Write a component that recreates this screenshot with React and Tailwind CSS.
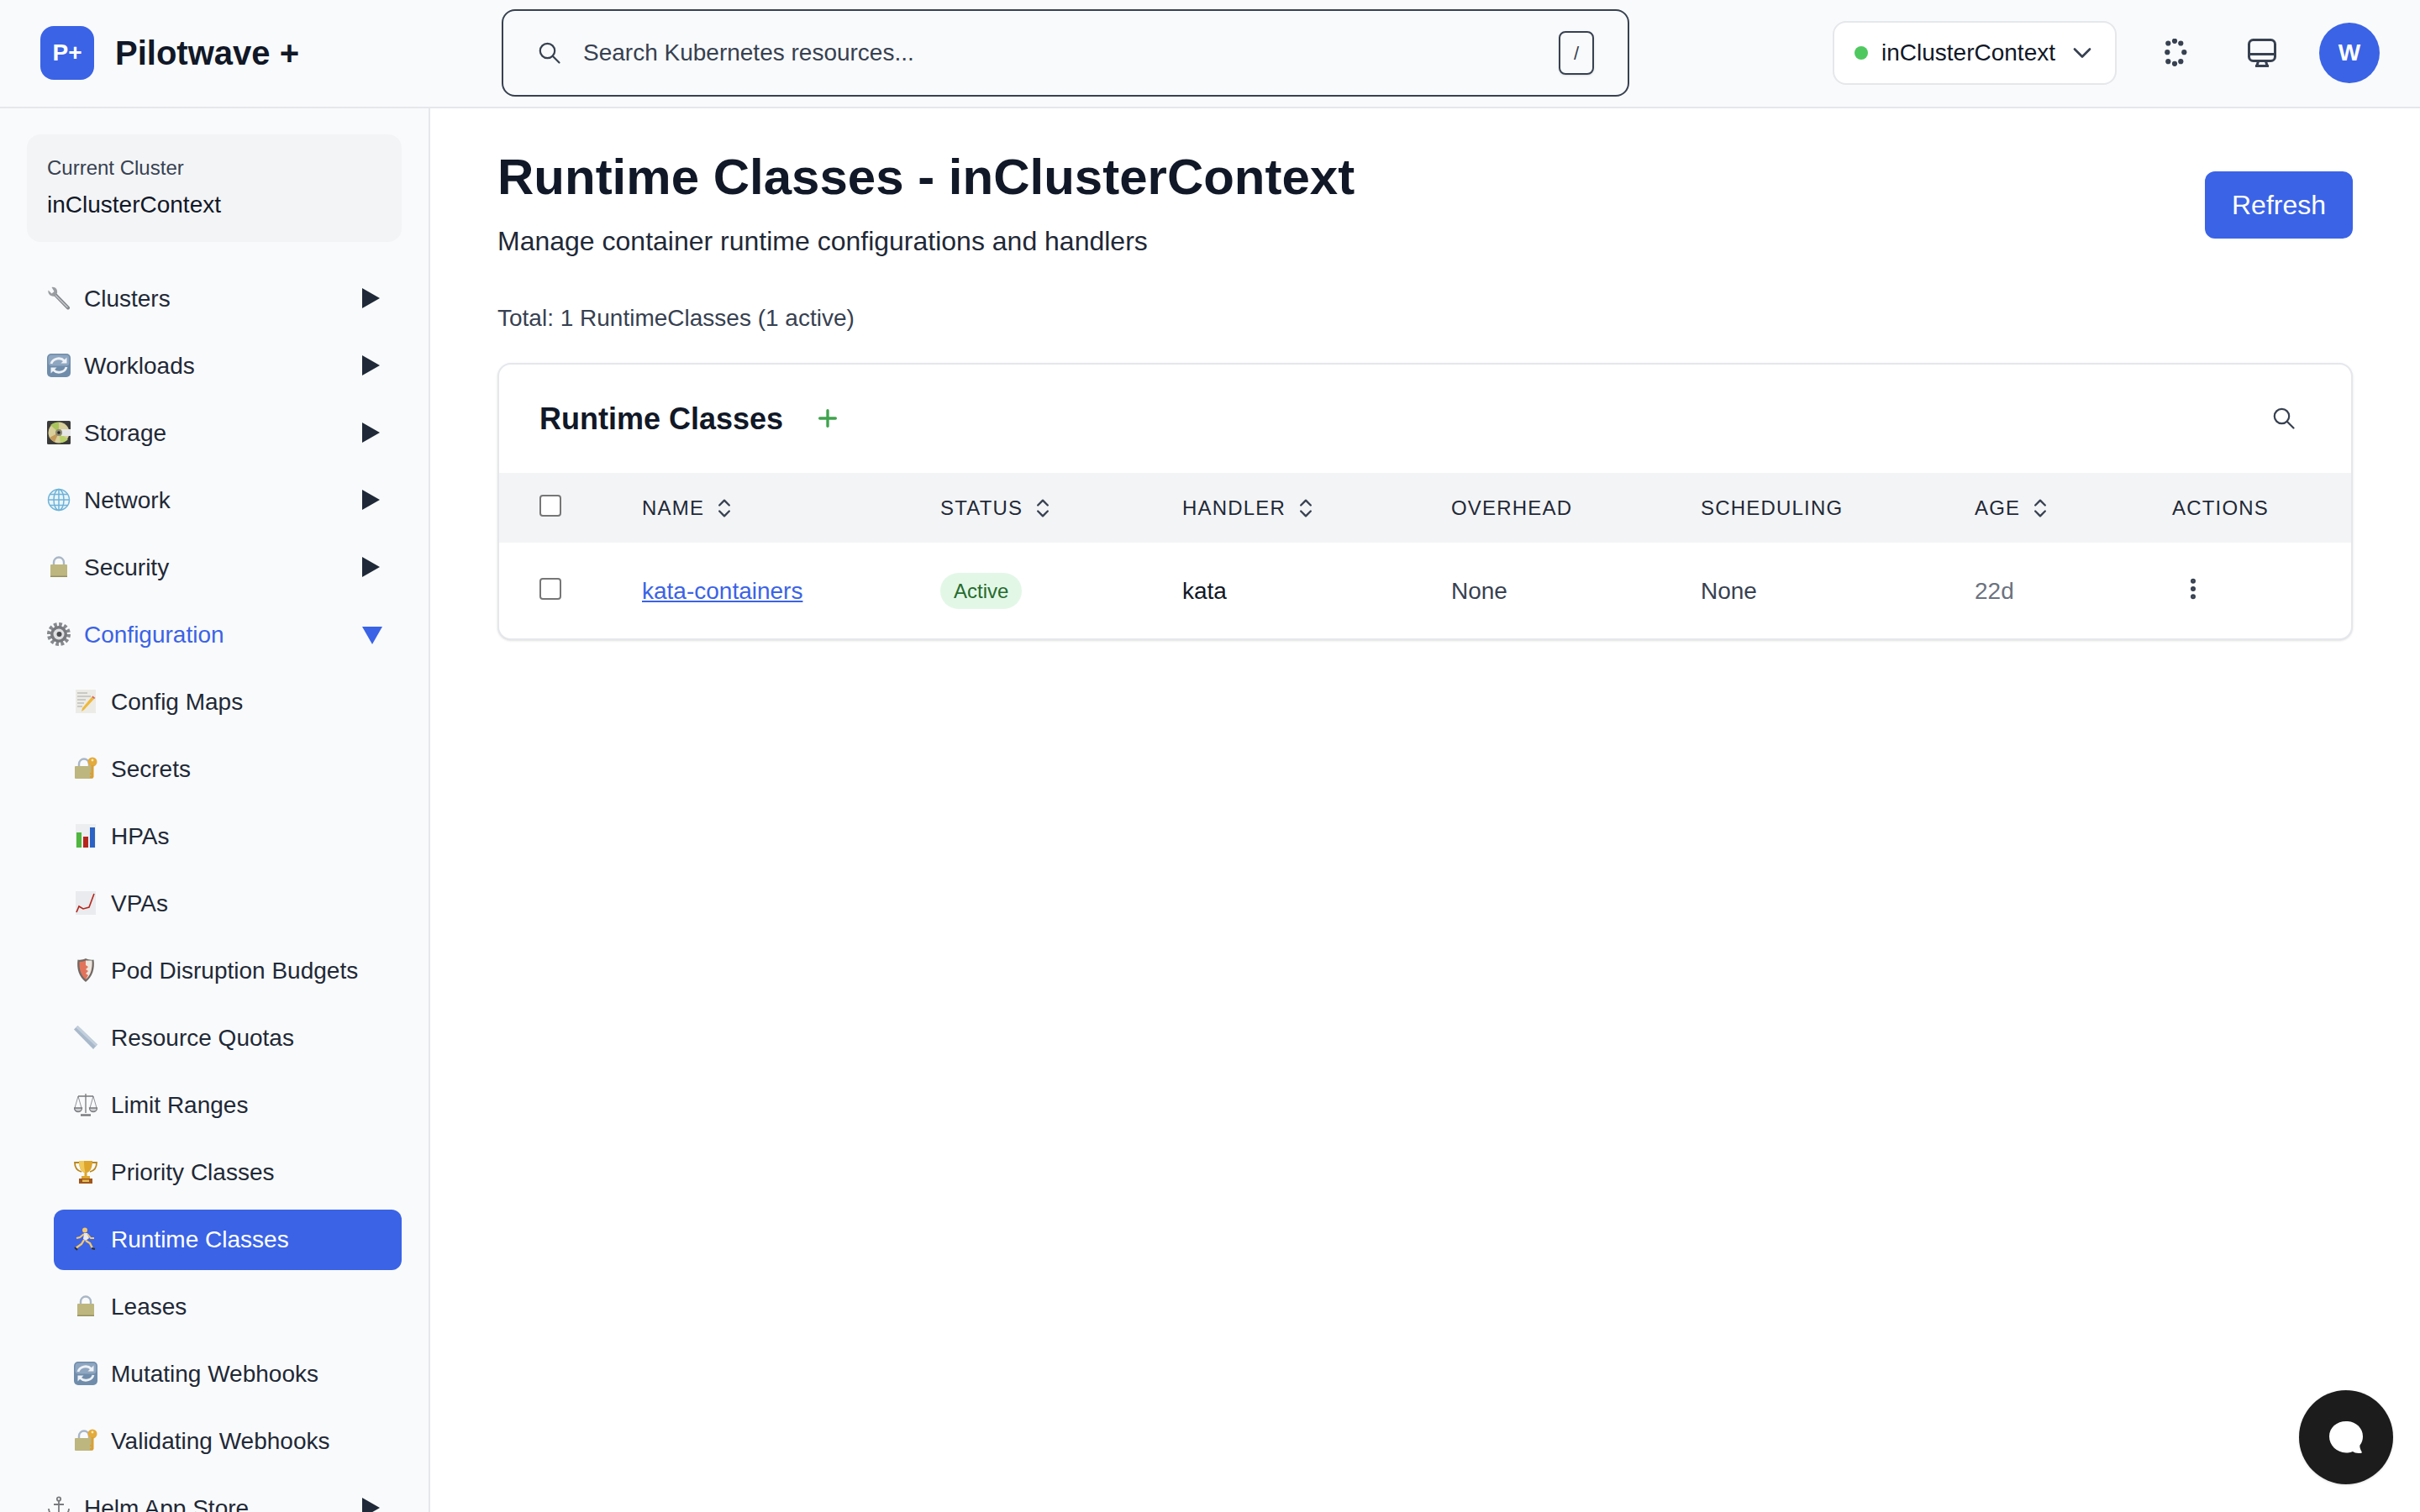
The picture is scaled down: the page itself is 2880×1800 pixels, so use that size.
import { ChevronDown, Plus, ChevronsUpDown, EllipsisVertical } from 'lucide-react';

// the picture shows system emoji; none is installed here, so they are drawn
function Wrench() {
  return (
    <svg viewBox="0 0 28 28" className="w-7 h-7">
      <path d="M25 25.500 9 9" stroke="#85888d" strokeWidth="4" strokeLinecap="round" />
      <path d="M24.500 25 10 10.500" stroke="#c9ccd0" strokeWidth="1.300" />
      <path d="M1.500 4.500 5.500 8.500 8.500 6 5.500 1C9.500 0 13 3.500 12 8L9 11.500C4.500 12.500.500 9 1.500 4.500Z" fill="#9a9da2" />
    </svg>
  );
}

function Cycle() {
  return (
    <svg viewBox="0 0 28 28" className="w-7 h-7">
      <rect width="28" height="28" rx="5" fill="#6f8cab" />
      <rect x="1.500" y="1.500" width="25" height="13" rx="4" fill="#8ea6c0" />
      <path d="M5 12a9 8 0 0 1 15.500-3.500" fill="none" stroke="#eef2f6" strokeWidth="2.800" />
      <path d="M23.500 4.500v7h-7Z" fill="#eef2f6" />
      <path d="M23 16a9 8 0 0 1-15.500 3.500" fill="none" stroke="#eef2f6" strokeWidth="2.800" />
      <path d="M4.500 23.500v-7h7Z" fill="#eef2f6" />
    </svg>
  );
}

function Disc() {
  return (
    <svg viewBox="0 0 28 28" className="w-7 h-7">
      <rect width="28" height="28" rx="1.500" fill="#3a3a3a" />
      <circle cx="14" cy="14" r="12.500" fill="#d8cf9a" />
      <path d="M14 14 4 5a13 13 0 0 1 10-3Z" fill="#a8c45a" />
      <path d="M14 14 25 22a13 13 0 0 1-9 4Z" fill="#b8d06a" />
      <path d="M14 14 3 20a13 13 0 0 0 6 5Z" fill="#c49a5a" />
      <rect x="17" y="10" width="11" height="8" fill="#e6e6e6" />
      <circle cx="14" cy="14" r="4" fill="#8d8a70" />
      <circle cx="14" cy="14" r="1.800" fill="#222" />
    </svg>
  );
}

function Globe() {
  return (
    <svg viewBox="0 0 28 28" className="w-7 h-7" fill="none" stroke="#6fb3d8" strokeWidth="1.500">
      <circle cx="14" cy="14" r="12.500" fill="#eaf5fb" />
      <ellipse cx="14" cy="14" rx="6" ry="12.500" />
      <path d="M14 1.500v25M1.500 14h25M3.500 7.500h21M3.500 20.500h21" />
    </svg>
  );
}

function Lock() {
  return (
    <svg viewBox="0 0 28 28" className="w-7 h-7">
      <path d="M8 12V8.500a6 6 0 0 1 12 0V12" fill="none" stroke="#a9b6c6" strokeWidth="2.400" />
      <rect x="4" y="11" width="20" height="15" rx="1" fill="#bdb67e" />
      <rect x="4" y="24.500" width="20" height="1.500" fill="#96905e" />
    </svg>
  );
}

function Gear() {
  return (
    <svg viewBox="0 0 28 28" className="w-7 h-7">
      <circle cx="14" cy="14" r="11.500" fill="none" stroke="#86898e" strokeWidth="5" strokeDasharray="3.600 2.400" />
      <circle cx="14" cy="14" r="10" fill="#77797e" />
      <circle cx="14" cy="14" r="6.500" fill="#dfe0e2" />
      <circle cx="14.500" cy="14" r="3" fill="#4a4c50" />
    </svg>
  );
}

function Memo() {
  return (
    <svg viewBox="0 0 28 28" className="w-7 h-7">
      <rect x="2" y="0" width="24" height="28" fill="#ecebe6" />
      <path d="M4 4h12M4 8h16M4 12h10M4 16h8M4 20h6" stroke="#a8a8a4" strokeWidth="1" />
      <path d="M24 11 12 24l-3 2 1-4 11-13Z" fill="#eeb93a" />
      <path d="M24 11l-3-2 1.500-1.500 3 2.500Z" fill="#d96a5e" />
    </svg>
  );
}

function LockKey() {
  return (
    <svg viewBox="0 0 28 28" className="w-7 h-7">
      <path d="M6 12V8.500a6 6 0 0 1 12 0V12" fill="none" stroke="#a9b6c6" strokeWidth="2.400" />
      <rect x="1" y="11" width="20" height="15" rx="1" fill="#bdb67e" />
      <circle cx="22" cy="6" r="5.500" fill="#e3aa3c" />
      <circle cx="22" cy="4" r="1.400" fill="#fbe9b4" />
      <path d="M20.500 10h3v14l-1.500 2-3-1v-2h1.500v-2h-1.500v-2h1.500Z" fill="#d99f35" />
    </svg>
  );
}

function Bars() {
  return (
    <svg viewBox="0 0 28 28" className="w-7 h-7">
      <rect x="2" y="0" width="24" height="28" fill="#eceef0" />
      <rect x="3" y="10" width="6" height="18" fill="#4fb63e" />
      <rect x="11" y="15" width="6" height="13" fill="#b5261c" />
      <rect x="19" y="4" width="6" height="24" fill="#2a63c4" />
    </svg>
  );
}

function ChartUp() {
  return (
    <svg viewBox="0 0 28 28" className="w-7 h-7">
      <rect x="2" y="0" width="24" height="28" fill="#e9ebee" />
      <path d="M3 25 6 18 11 21 18 19 24 3" fill="none" stroke="#b5261c" strokeWidth="1.600" />
    </svg>
  );
}

function Shield() {
  return (
    <svg viewBox="0 0 28 28" className="w-7 h-7">
      <path d="M14 0c3 1.500 6 2 9.500 1.500C25 12 22 22 14 28 6 22 3 12 4.500 1.500 8 2 11 1.500 14 0Z" fill="#6e6a66" />
      <path d="M14 2.500c3 1 5 1.500 7.500 1.200C22 12 20 20 14 25 8 20 6 12 6.500 3.700 9 4 11 3.500 14 2.500Z" fill="#e2735a" />
      <path d="M14 2.500h7.500C22 12 20 20 14 25l3-5-3-2 3-3-3-2 3-3-3-2Z" fill="#ece7df" />
    </svg>
  );
}

function Ruler() {
  return (
    <svg viewBox="0 0 28 28" className="w-7 h-7">
      <path d="M4.500 0 28 22.500 23 28 0 4.500Z" fill="#a9b9cb" />
      <path d="M4.500 0 28 22.500 26 24.500 2.500 2.500Z" fill="#c3cfdc" />
    </svg>
  );
}

function Scales() {
  return (
    <svg viewBox="0 0 28 28" className="w-7 h-7" fill="none" stroke="#77797d" strokeWidth="1.300">
      <path d="M14 1v23M5 4h18" />
      <path d="M8 26.500h12" strokeWidth="2.400" />
      <path d="M5 4 1 18M5 4l4 14M23 4l-4 14M23 4l4 14" strokeWidth="0.800" />
      <path d="M0.500 18h9a4.500 4.500 0 0 1-9 0ZM18.500 18h9a4.500 4.500 0 0 1-9 0Z" fill="#cdcfd2" />
    </svg>
  );
}

function Trophy() {
  return (
    <svg viewBox="0 0 28 28" className="w-7 h-7">
      <path d="M7 3H1c0 7 4 10 8 11M21 3h6c0 7-4 10-8 11" fill="none" stroke="#b8861e" strokeWidth="1.800" />
      <path d="M6 1h16c0 9-3 13-6.500 14v4h-3v-4C9 14 6 10 6 1Z" fill="#dda52c" />
      <path d="M6 1h6c0 8 1 11 1.500 14C9 14 6 10 6 1Z" fill="#f0c95a" />
      <rect x="9" y="19" width="10" height="3" fill="#dda52c" />
      <rect x="6" y="22" width="16" height="6" fill="#a0561c" />
      <rect x="10" y="23.500" width="8" height="2.500" fill="#e6bf58" />
    </svg>
  );
}

function Runner() {
  return (
    <svg viewBox="0 0 28 28" className="w-7 h-7">
      <circle cx="13" cy="3.500" r="3" fill="#f4c76a" />
      <path d="M12 7h4l2 6-4 3-3-2Z" fill="#e8eaf0" />
      <path d="M12 8 7 12 3 13M16 8l4 5h4" fill="none" stroke="#f4c76a" strokeWidth="2" />
      <path d="M12 15 9 20 2 25M14 16l5 3 3 6" fill="none" stroke="#f4c76a" strokeWidth="2.400" />
      <path d="M1 24l3 3M21 25l4 1" stroke="#2b2b33" strokeWidth="2" />
    </svg>
  );
}

function Anchor() {
  return (
    <svg viewBox="0 0 28 28" className="w-7 h-7" fill="none" stroke="#787a7e" strokeWidth="1.800">
      <circle cx="14" cy="3.500" r="2.200" />
      <path d="M14 6v20M8 10h12M2 15c0 6 6 10 12 11 6-1 12-5 12-11" />
    </svg>
  );
}

function Arrow({ open }) {
  if (open) {
    return (
      <svg viewBox="0 0 24 21" className="w-6 h-[21px] fill-[#3b63e6]">
        <path d="M0 0h24L12 21Z" />
      </svg>
    );
  }
  return (
    <svg viewBox="0 0 24 24" className="w-6 h-6 -mt-[3px] fill-[#1f2937]">
      <path d="M0 0 21 12 0 24Z" />
    </svg>
  );
}

const topBefore = [
  ['Clusters', Wrench],
  ['Workloads', Cycle],
  ['Storage', Disc],
  ['Network', Globe],
  ['Security', Lock],
];

const configItems = [
  ['Config Maps', Memo],
  ['Secrets', LockKey],
  ['HPAs', Bars],
  ['VPAs', ChartUp],
  ['Pod Disruption Budgets', Shield],
  ['Resource Quotas', Ruler],
  ['Limit Ranges', Scales],
  ['Priority Classes', Trophy],
  ['Runtime Classes', Runner],
  ['Leases', Lock],
  ['Mutating Webhooks', Cycle],
  ['Validating Webhooks', LockKey],
];

function NavRow({ label, Icon, arrow, open, active }) {
  return (
    <div className={`flex items-center h-[72px] mb-2 pl-6 pr-[23px] rounded-xl text-[28px] ${active ? 'bg-[#3b63e6] text-white' : open ? 'text-[#3b63e6]' : 'text-[#1f2937]'}`}>
      <span className="w-7 h-7 mr-4 -mt-[3px] shrink-0"><Icon /></span>
      <span className="whitespace-nowrap">{label}</span>
      {arrow && <span className="ml-auto flex"><Arrow open={open} /></span>}
    </div>
  );
}

function SortIcon() {
  return <ChevronsUpDown size={28} strokeWidth={2} className="text-[#374151] ml-[10px] shrink-0" />;
}

// longer handle than lucide's Search
function SearchIcon() {
  return (
    <svg viewBox="0 0 28 28" className="w-7 h-7 shrink-0 fill-none stroke-[#374151]" strokeWidth="2.200" strokeLinecap="round">
      <circle cx="11.500" cy="11.500" r="8.700" />
      <path d="M18 18l7.500 7.500" />
    </svg>
  );
}

function DotsIcon() {
  const dots = [[8.3, 5.500], [16, 2.800], [23.300, 5.500], [7.300, 16.200], [27.300, 16.200], [8.300, 27.200], [16, 29.800], [23.300, 27.200]];
  return (
    <svg viewBox="0 0 34 34" className="w-[34px] h-[34px] fill-[#374151]">
      {dots.map(([cx, cy]) => <circle key={`${cx}-${cy}`} cx={cx} cy={cy} r="3.100" />)}
    </svg>
  );
}

function MonitorIcon() {
  return (
    <svg viewBox="0 0 34 34" className="w-[34px] h-[34px] fill-none stroke-[#374151]" strokeWidth="3">
      <rect x="1.500" y="1.500" width="31" height="25" rx="5" />
      <path d="M2 18.500h30" />
      <path d="M12.500 27 11 32M21.500 27l1.500 5" />
      <path d="M9 32.500h16" />
    </svg>
  );
}

function Header() {
  return (
    <header className="flex items-center h-[129px] pb-px shrink-0 border-b-2 border-[#e5e7eb] bg-[#f9fafb]">
      <div className="w-[597px] shrink-0 flex items-center pl-12">
        <div className="w-16 h-16 rounded-2xl bg-[#3b63e6] flex items-center justify-center text-white font-bold text-[28px]">P+</div>
        <span className="ml-[25px] text-[40px] font-bold text-[#111827] whitespace-nowrap">Pilotwave +</span>
      </div>
      <div className="w-[1342px] h-[104px] shrink-0 flex items-center rounded-2xl border-2 border-[#374151] pl-[41px] pr-10">
        <SearchIcon />
        <span className="ml-[26px] text-[28px] text-[#374151]">Search Kubernetes resources...</span>
        <kbd className="ml-auto w-[42px] h-[52px] flex items-center justify-center rounded-lg border-2 border-[#374151] shadow-sm text-[22px] text-[#374151] font-['Liberation_Sans',sans-serif]">/</kbd>
      </div>
      <div className="flex-1 flex items-center justify-end pr-12">
        <div className="w-[338px] h-[76px] flex items-center rounded-2xl border-2 border-[#e5e7eb] bg-white pl-6">
          <span className="w-4 h-4 rounded-full bg-[#4fc860] shrink-0" />
          <span className="ml-4 text-[28px] text-[#111827]">inClusterContext</span>
          <ChevronDown size={36} strokeWidth={1.800} className="text-[#374151] ml-[14px] shrink-0" />
        </div>
        <span className="ml-[53px] flex"><DotsIcon /></span>
        <span className="ml-[69px] flex"><MonitorIcon /></span>
        <div className="ml-[51px] w-[72px] h-[72px] rounded-full bg-[#3b63e6] flex items-center justify-center text-white font-bold text-[28px]">W</div>
      </div>
    </header>
  );
}

function Sidebar() {
  return (
    <aside className="w-[512px] shrink-0 border-r-2 border-[#e5e7eb] bg-[#f9fafb] overflow-hidden pt-[31px]">
      <div className="mx-8 w-[446px] h-32 rounded-2xl bg-[#f3f4f6] pl-6 pt-[25px]">
        <div className="text-[24px] leading-[30px] text-[#374151]">Current Cluster</div>
        <div className="mt-[13px] text-[28px] leading-[32px] text-[#111827]">inClusterContext</div>
      </div>
      <nav className="mt-[32px] mx-8 w-[446px]">
        {topBefore.map(([label, Icon]) => (
          <NavRow key={label} label={label} Icon={Icon} arrow />
        ))}
        <NavRow label="Configuration" Icon={Gear} arrow open />
        <div className="pl-8">
          {configItems.map(([label, Icon]) => (
            <NavRow key={label} label={label} Icon={Icon} active={label === 'Runtime Classes'} />
          ))}
        </div>
        <NavRow label="Helm App Store" Icon={Anchor} arrow />
      </nav>
    </aside>
  );
}

function RuntimeTable() {
  const thClass = 'text-left font-normal text-[24px] tracking-[0.05em] text-[#1f2937] whitespace-nowrap';
  return (
    <div className="mt-[35px] rounded-2xl border-2 border-[#e5e7eb] shadow-sm bg-white overflow-hidden">
      <div className="h-[129px] flex items-center pl-12 pr-[66px]">
        <h2 className="text-[36px] font-bold text-[#111827]">Runtime Classes</h2>
        <Plus size={32} strokeWidth={2.500} className="text-[#3fa34d] ml-[37px] -mt-px" />
        <span className="ml-auto -mt-px flex"><SearchIcon /></span>
      </div>
      <table className="w-full table-fixed border-collapse">
        <colgroup>
          <col className="w-[170px]" />
          <col className="w-[355px]" />
          <col className="w-[288px]" />
          <col className="w-[320px]" />
          <col className="w-[297px]" />
          <col className="w-[326px]" />
          <col className="w-[235px]" />
          <col className="w-[213px]" />
        </colgroup>
        <thead>
          <tr className="h-[83px] bg-[#f3f4f6]">
            <th className="pl-12 text-left"><span className="block w-[26px] h-[26px] rounded border-2 border-[#767676] bg-white -mt-[6px]" /></th>
            <th className={thClass}><span className="flex items-center">NAME<SortIcon /></span></th>
            <th className={thClass}><span className="flex items-center">STATUS<SortIcon /></span></th>
            <th className={thClass}><span className="flex items-center">HANDLER<SortIcon /></span></th>
            <th className={thClass}>OVERHEAD</th>
            <th className={thClass}>SCHEDULING</th>
            <th className={thClass}><span className="flex items-center">AGE<SortIcon /></span></th>
            <th className={thClass}>ACTIONS</th>
          </tr>
        </thead>
        <tbody>
          <tr className="h-[114px] text-[28px]">
            <td className="pl-12"><span className="block w-[26px] h-[26px] rounded border-2 border-[#767676] -mt-[5px]" /></td>
            <td className="pt-px text-[#3b63e6] underline">kata-containers</td>
            <td className="pt-px"><span className="inline-flex items-center h-[43px] px-4 rounded-full bg-[#e3f7e7] text-[#256b2e] text-[24px]">Active</span></td>
            <td className="pt-px text-[#111827]">kata</td>
            <td className="pt-px text-[#374151]">None</td>
            <td className="pt-px text-[#374151]">None</td>
            <td className="pt-px text-[#6b7280]">22d</td>
            <td><EllipsisVertical size={32} strokeWidth={2.500} className="text-[#374151] ml-[9px] -mt-1" /></td>
          </tr>
        </tbody>
      </table>
    </div>
  );
}

function App() {
  return (
    <div className="h-screen flex flex-col overflow-hidden bg-white font-['Liberation_Sans',Arial,sans-serif]">
      <Header />
      <div className="flex flex-1 min-h-0">
        <Sidebar />
        <main className="flex-1 min-w-0 px-20 pt-[46px] relative">
          <div className="flex items-start justify-between">
            <div>
              <h1 className="text-[60px] leading-[72px] font-bold text-[#111827] whitespace-nowrap">Runtime Classes - inClusterContext</h1>
              <p className="mt-[20px] text-[32px] leading-[40px] text-[#1f2937]">Manage container runtime configurations and handlers</p>
            </div>
            <button className="mt-[29px] w-[176px] h-20 rounded-xl bg-[#3b63e6] text-white text-[32px]">Refresh</button>
          </div>
          <p className="mt-[54px] text-[28px] leading-[36px] text-[#374151]">Total: 1 RuntimeClasses (1 active)</p>
          <RuntimeTable />
          <button className="absolute right-8 bottom-[33px] w-28 h-28 rounded-full bg-[#1c1c1c] flex items-center justify-center shadow-sm">
            <svg viewBox="0 0 40 38" className="w-10 h-[38px] fill-white">
              <path d="M20 0C31 0 40 7.500 40 18c0 4-1.200 7.500-3.500 10.500-.5 2 .5 5 2 7.500 1 2-1 2-3.500 2-3 0-5.500-1-7-2-2.500 1-5 1.500-8 1.500C9 37 0 29 0 18 0 7.500 9 0 20 0Z" />
            </svg>
          </button>
        </main>
      </div>
    </div>
  );
}

export default App;
